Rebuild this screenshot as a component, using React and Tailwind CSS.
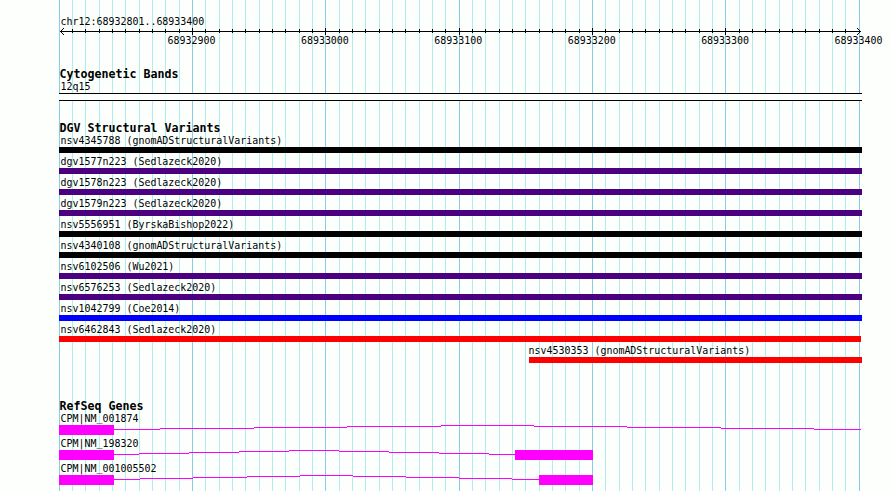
import React from 'react';

const variants = [
  { name: 'nsv4345788 (gnomADStructuralVariants)', bar: 'w-[803px] bg-black' },
  { name: 'dgv1577n223 (Sedlazeck2020)', bar: 'w-[803px] bg-[#4b0082]' },
  { name: 'dgv1578n223 (Sedlazeck2020)', bar: 'w-[803px] bg-[#4b0082]' },
  { name: 'dgv1579n223 (Sedlazeck2020)', bar: 'w-[803px] bg-[#4b0082]' },
  { name: 'nsv5556951 (ByrskaBishop2022)', bar: 'w-[803px] bg-black' },
  { name: 'nsv4340108 (gnomADStructuralVariants)', bar: 'w-[803px] bg-black' },
  { name: 'nsv6102506 (Wu2021)', bar: 'w-[803px] bg-[#4b0082]' },
  { name: 'nsv6576253 (Sedlazeck2020)', bar: 'w-[803px] bg-[#4b0082]' },
  { name: 'nsv1042799 (Coe2014)', bar: 'w-[803px] bg-[#0000ff]' },
  { name: 'nsv6462843 (Sedlazeck2020)', bar: 'w-[802px] bg-[#ff0000]' },
  { name: 'nsv4530353 (gnomADStructuralVariants)', bar: 'w-[333px] bg-[#ff0000]', row: 'ml-[470px]', label: '-ml-[2px]' }
];

// exons are [start, end], introns are [start, end, y], relative to the track
const genes = [
  {
    accession: '001874',
    exons: [[0, 55]],
    introns: [
      [55, 101, 4], [101, 195, 3], [195, 288, 2], [288, 382, 1], [382, 475, 0],
      [475, 568, 1], [568, 662, 2], [662, 755, 3], [755, 802, 4]
    ]
  },
  {
    accession: '198320',
    exons: [[0, 55], [456, 534]],
    introns: [
      [55, 80, 4], [80, 130, 3], [130, 180, 2], [180, 230, 1], [230, 280, 0],
      [280, 330, 1], [330, 380, 2], [380, 430, 3], [430, 456, 4]
    ]
  },
  {
    accession: '001005502',
    exons: [[0, 55], [480, 534]],
    introns: [
      [55, 81, 4], [81, 134, 3], [134, 188, 2], [188, 241, 1], [241, 294, 0],
      [294, 347, 1], [347, 400, 2], [400, 453, 3], [453, 480, 4]
    ]
  }
];

const positions = ['68932900', '68933000', '68933100', '68933200', '68933300', '68933400'];

const ticks = Array.from({ length: 61 }, (_, i) => ({
  x: Math.floor((i * 40) / 3),
  major: i % 10 === 0
}));

const GridLines = () => (
  <svg className="absolute left-[59px] top-0 -z-10" width="803" height="491" shapeRendering="crispEdges">
    {ticks.map(({ x, major }) => (
      <rect key={x} x={x} y="0" width="1" height="491" fill={major ? '#87ceeb' : '#afeeee'} />
    ))}
  </svg>
);

const Label = ({ children, className = '' }) => (
  <div className={`h-[15px] pl-[1.5px] text-[9.966px] leading-[17px] whitespace-pre ${className}`}>{children}</div>
);

const Heading = ({ children }) => (
  <h2 className="h-3 pl-[0.5px] text-[11.63px] leading-[17px] font-bold whitespace-pre">{children}</h2>
);

const Ruler = () => (
  <div className="h-[39px]">
    <svg className="block" width="803" height="8" shapeRendering="crispEdges">
      <rect x="1" y="4" width="801" height="1" />
      {ticks.slice(1, -1).map(({ x, major }) => (
        <rect key={x} x={x} y={major ? 1 : 2} width="1" height={major ? 7 : 4} />
      ))}
      <path d="M1 4h1v1h-1zM2 3h1v1h-1zM3 2h1v1h-1zM4 1h1v1h-1zM2 5h1v1h-1zM3 6h1v1h-1zM4 7h1v1h-1z" />
      <path d="M801 4h1v1h-1zM800 3h1v1h-1zM799 2h1v1h-1zM798 1h1v1h-1zM800 5h1v1h-1zM799 6h1v1h-1zM798 7h1v1h-1z" />
    </svg>
    <div className="ml-[108.5px] flex w-[715px] justify-between text-[9.966px] leading-[11px]">
      {positions.map(p => (
        <span key={p}>{p}</span>
      ))}
    </div>
  </div>
);

const Gene = ({ gene }) => (
  <div className="h-[25px]">
    <Label>
      CPM|NM<span className="align-[1px] leading-none">_</span>{gene.accession}
    </Label>
    <svg className="block" width="803" height="10" fill="#ff00ff" shapeRendering="crispEdges">
      {gene.introns.map(([start, end, y]) => (
        <rect key={start} x={start} y={y} width={end - start} height="1" />
      ))}
      {gene.exons.map(([start, end]) => (
        <rect key={start} x={start} y="0" width={end - start} height="10" />
      ))}
    </svg>
  </div>
);

export default function App() {
  return (
    <div className="relative isolate h-[491px] w-[890px] overflow-hidden bg-[#fdfffc] pt-3 pl-[59px] font-['DejaVu_Sans_Mono',monospace] text-black">
      <GridLines />
      <Label className="pt-px">chr12:68932801..68933400</Label>
      <Ruler />

      <section className="h-[54px]">
        <Heading>Cytogenetic Bands</Heading>
        <Label>12q15</Label>
        <div className="h-2 w-[803px] border-y border-black bg-[#fdfffc]" />
      </section>

      <section className="h-[278px]">
        <Heading>DGV Structural Variants</Heading>
        {variants.map(({ name, bar, row = '', label }) => (
          <div key={name} className={`h-[21px] ${row}`}>
            <Label className={label}>{name}</Label>
            <div className={`h-1.5 ${bar}`} />
          </div>
        ))}
      </section>

      <section>
        <Heading>RefSeq Genes</Heading>
        {genes.map(gene => (
          <Gene key={gene.accession} gene={gene} />
        ))}
      </section>
    </div>
  );
}
